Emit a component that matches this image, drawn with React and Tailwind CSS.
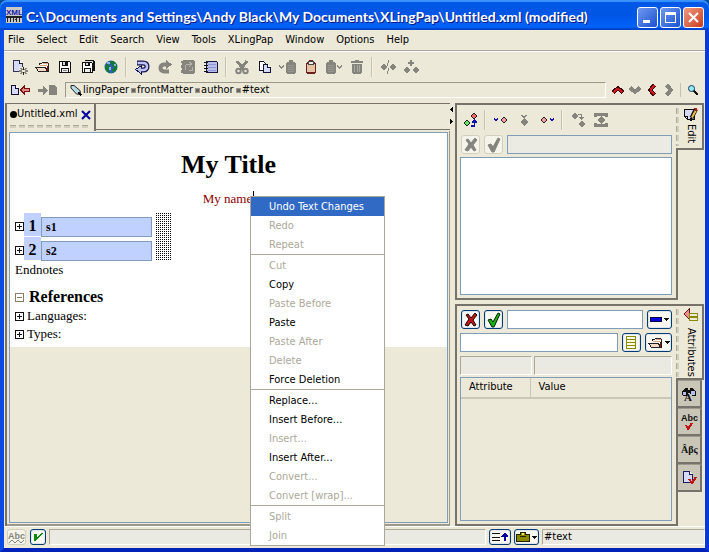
import React from "react";

const GREY = "#85857d";

function Icon({ w = 16, h = 16, children, label }) {
  return (
    <svg width={w} height={h} viewBox={`0 0 ${w} ${h}`} fill="none" shapeRendering="crispEdges" className="block shrink-0" role={label ? "img" : undefined} aria-label={label} aria-hidden={label ? undefined : true}>
      {children}
    </svg>
  );
}

const NewIcon = () => (
  <Icon w={18}>
    <path d="M3.500 1.500h6l3 3v8h-9z" fill="#d6d9f8" stroke="#33334e" />
    <path d="M9.500 1.500v3h3" fill="#fff" stroke="#1a1a2e" />
    <path d="M9 8h8v8H9z" fill="#ece9d8" />
    <path d="M13.500 8v3M13.500 13v3M9 12h3M15 12h3M10.500 9l2 2M16.500 9l-2 2M10.500 15l2-2M16.500 15l-2-2" stroke="#222" shapeRendering="auto" />
  </Icon>
);
const OpenIcon = () => (
  <Icon>
    <path d="M5.500 6V4.500h2l1-1h5l1 1v8h-2" fill="#fff6ee" stroke="#222" />
    <path d="M9 4.500h5M6 6.500h7" stroke="#e0a488" />
    <path d="M2 8.500h9.500l2 4h-9z" fill="#f3d9c6" stroke="#222" />
    <path d="M13.500 7v5" stroke="#7a1313" />
  </Icon>
);
const SaveIcon = () => (
  <Icon>
    <path d="M2.500 2.500h10l1 1v10h-11z" fill="#fff" stroke="#111" />
    <path d="M5.500 2.500h5v4h-5z" fill="#d8d8d8" stroke="#111" />
    <path d="M4.500 9.500h7v4h-7z" fill="#eee" stroke="#111" />
    <path d="M6 11.500h4" stroke="#888" />
    <path d="M8 3h2v3H8z" fill="#111" />
  </Icon>
);
const SaveAllIcon = () => (
  <Icon>
    <path d="M4.500 1.500h9l1 1v9h-2M13.500 2v10" fill="#d5d5d5" stroke="#111" />
    <path d="M2.500 3.500h9l1 1v9h-10z" fill="#fff" stroke="#111" />
    <path d="M5.500 3.500h4v3h-4z" fill="#d8d8d8" stroke="#111" />
    <path d="M4.500 9.500h6v4h-6z" fill="#eee" stroke="#111" />
    <path d="M8 4h1v2H8z" fill="#111" />
  </Icon>
);
const GlobeIcon = () => (
  <Icon>
    <circle cx="8" cy="8" r="6.500" fill="#2c5fb4" shapeRendering="auto" />
    <path d="M7 2h3l4 3v5l-3 4-1 0-1-4 2-2-3-2zM3 5l2 0 2 3-2 2 2 4-2 0-3-4z" fill="#127a35" />
    <path d="M4 3h3v2H4zM6 8h2v3H6zM11 5h2v2h-2z" fill="#8fb5e8" />
  </Icon>
);
const UndoIcon = () => (
  <Icon>
    <path d="M3 4h6q4 0 4 3.500T9 11H7" stroke="#151550" strokeWidth="5" shapeRendering="auto" />
    <path d="M7.500 6.500v8.500l-6-4.500z" fill="#b9bdea" stroke="#151550" />
    <path d="M3.500 4H9q4 0 4 3.500T9 11H6" stroke="#c0c4f2" strokeWidth="2.500" shapeRendering="auto" />
  </Icon>
);
const RedoIcon = () => (
  <Icon>
    <path d="M10 5.500H7Q3.500 6 3.500 9t3.500 3.500h5" stroke={GREY} strokeWidth="4" shapeRendering="auto" />
    <path d="M9 1v9l6-4.500z" fill={GREY} />
  </Icon>
);
const RepeatIcon = () => (
  <Icon>
    <path d="M3 1h11v1h1v12h-1v1H3v-1H1v-3h1V9H1V6h1V4H1V2h2z" fill={GREY} />
    <path d="M6 11Q4 5 8 5h3M9 3l3 2-3 3M12 8v3H9" stroke="#b5b3a8" />
  </Icon>
);
const HistoryIcon = () => (
  <Icon>
    <path d="M3.500 2.500h10l1 1v10h-11z" fill="#b9bdea" stroke="#151540" />
    <path d="M5 5.500h8M5 8.500h8M5 11.500h8" stroke="#8f94d6" />
    <path d="M1 3.500h4M1 6.500h4M1 9.500h4M1 12.500h4" stroke="#111" />
  </Icon>
);
const CutIcon = () => (
  <Icon>
    <path d="M3 2l7 9M13 2l-7 9" stroke={GREY} strokeWidth="3" />
    <circle cx="4.500" cy="12" r="2.200" stroke={GREY} strokeWidth="2" shapeRendering="auto" />
    <circle cx="11.500" cy="12" r="2.200" stroke={GREY} strokeWidth="2" shapeRendering="auto" />
  </Icon>
);
const CopyIcon = () => (
  <Icon>
    <path d="M2.500 2.500h4l2 2v7h-6z" fill="#fff" stroke="#111133" />
    <path d="M6.500 5.500h4l3 3v5h-7z" fill="#d6d9f8" stroke="#111133" />
    <path d="M10.500 5.500v3h3" fill="#fff" stroke="#111133" />
  </Icon>
);
const Clip = ({ x = 0, live }) => (
  <g transform={`translate(${x} 0)`}>
    <path d="M3 3h2V1h4v2h2v1h1v10h-1v1H3v-1H2V4h1z" fill={live ? "#6d2020" : GREY} />
    {live ? <path d="M3 5h8v8H3z" fill="#e3c3a4" /> : <path d="M4 6h6M4 8h6M4 10h6M4 12h6" stroke="#98988f" />}
    {live && <path d="M4.500 2.500h5v3h-5z" fill="#eee" stroke="#444" />}
  </g>
);
const PasteBeforeIcon = () => (
  <Icon w={18}>
    <path d="M0 6.500L2.500 9 5 6.500" stroke={GREY} strokeWidth="2" />
    <Clip x={5} />
  </Icon>
);
const PasteIcon = () => (
  <Icon>
    <Clip x={1} live />
  </Icon>
);
const PasteAfterIcon = () => (
  <Icon w={18}>
    <Clip x={-1} />
    <path d="M12 6.500L14.500 9 17 6.500" stroke={GREY} strokeWidth="2" />
  </Icon>
);
const TrashIcon = () => (
  <Icon>
    <path d="M2 2h4V1h4v1h4v2H2zM3 5h10v9h-1v1H4v-1H3z" fill={GREY} />
    <path d="M5.500 6v7M8.500 6v7M10.500 6v7" stroke="#aaa9a0" />
  </Icon>
);
const SplitIcon = () => (
  <Icon>
    <path d="M0 8l3.500-3.500L7 8l-3.500 3.500zM9 8l3.500-3.500L16 8l-3.500 3.500z" fill={GREY} />
    <path d="M8.500 1v3M7.500 4v3M8.500 9v3M7.500 12v3" stroke={GREY} />
  </Icon>
);
const JoinIcon = () => (
  <Icon>
    <path d="M0 11l3.500-3.500L7 11l-3.500 3.500zM9 11l3.500-3.500L16 11l-3.500 3.500z" fill={GREY} />
    <path d="M8 1v6M5 4h6" stroke={GREY} strokeWidth="2" />
  </Icon>
);
const BackIcon = () => (
  <Icon w={20}>
    <path d="M1.500 3.500h4l3 3v6h-7z" fill="#d6d9f8" stroke="#111133" />
    <path d="M5.500 3.500v3h3" fill="#fff" stroke="#111133" />
    <path d="M10.500 8L14 4.500v2h5v3h-5v2z" fill="#e08a8a" stroke="#7a1010" />
  </Icon>
);
const ForwardIcon = () => (
  <Icon w={20}>
    <path d="M0 7h5V4l5 4.500L5 13v-3H0z" fill={GREY} />
    <path d="M11 3h5l3 3v7h-8z" fill={GREY} />
  </Icon>
);
const PencilIcon = () => (
  <Icon w={12} h={12}>
    <path d="M1 1.500h3l6 5 .500 4-4-.500L1 4z" fill="#b7dbe4" stroke="#222" shapeRendering="auto" />
    <path d="M8.500 8.500l3 3" stroke="#111" strokeWidth="1.500" />
  </Icon>
);
const Chevron = ({ turn, live }) => (
  <Icon w={12} h={12}>
    <g transform={`rotate(${turn} 6 6)`}>
      <path d="M1 8.500l5-4.500 5 4.500" stroke={live ? "#3a0505" : GREY} strokeWidth="4" />
      {live && <path d="M1.500 8.500l4.500-4 4.500 4" stroke="#cc1a1a" strokeWidth="2" />}
    </g>
  </Icon>
);
const SearchIcon = () => (
  <Icon w={12} h={12}>
    <path d="M6 6l5 5" stroke="#111" strokeWidth="2" />
    <circle cx="4.500" cy="4.500" r="3" fill="#8ff0f4" stroke="#223366" shapeRendering="auto" />
  </Icon>
);
const Diamond = ({ cx, cy, fill = "#f59a9a", stroke = "#222" }) => (
  <path d={`M${cx - 3} ${cy}l3-3 3 3-3 3z`} fill={fill} stroke={stroke} shapeRendering="auto" />
);
const TreeIcon = () => (
  <Icon>
    <Diamond cx={11} cy={4} fill="#f06a6a" />
    <Diamond cx={4} cy={11} fill="#63e563" />
    <path d="M8 14h3.500V9M9 11l2.500-2.500L14 11" stroke="#1212a8" strokeWidth="1.500" />
  </Icon>
);
const BeforeIcon = () => (
  <Icon>
    <path d="M1 6.500l2 2 2-2" stroke="#1212a8" strokeWidth="2" />
    <Diamond cx={11} cy={8} />
  </Icon>
);
const InsertIcon = () => (
  <Icon>
    <path d="M5.500 3L8 5.500 10.500 3" stroke={GREY} strokeWidth="1.500" />
    <path d="M4 10l4-4 4 4-4 4z" fill={GREY} />
  </Icon>
);
const AfterIcon = () => (
  <Icon>
    <Diamond cx={5} cy={8} />
    <path d="M11 6.500l2 2 2-2" stroke="#1212a8" strokeWidth="2" />
  </Icon>
);
const ConvertIcon = () => (
  <Icon>
    <path d="M1 4l3.500-3.500L8 4 4.500 7.500zM8 12l3.500-3.500L15 12l-3.500 3.500z" fill={GREY} />
    <path d="M8 2.500h3.500V7M9.500 5l2 2 2-2" stroke={GREY} />
  </Icon>
);
const WrapIcon = () => (
  <Icon>
    <path d="M1 1h14v4h-3V4H4v1H1zM1 15h14v-4h-3v1H4v-1H1z" fill={GREY} />
    <path d="M4 8l4-4 4 4-4 4z" fill={GREY} />
  </Icon>
);
const CrossIcon = ({ off }) => (
  <Icon>
    <path d="M3 3l2-1 3 4 4-5 2 2-4 5 3 5-2 1-3-4-3 4-3-1 4-6z" fill={off ? GREY : "#c01414"} stroke={off ? GREY : "#1c0303"} shapeRendering="auto" />
  </Icon>
);
const CheckIcon = ({ off }) => (
  <Icon>
    <path d="M2 8l3-1 2 3 5-9 2 1-6 13H6z" fill={off ? GREY : "#12b012"} stroke={off ? GREY : "#052605"} shapeRendering="auto" />
  </Icon>
);
const EditIcon = () => (
  <Icon>
    <path d="M1.500 2.500h10v10h-7l-3-3z" fill="#d6d9f8" stroke="#111" />
    <path d="M1.500 9.500h3v3" fill="#fff" stroke="#111" />
    <path d="M13 2l-4.500 9" stroke="#111" strokeWidth="4" shapeRendering="auto" />
    <path d="M13 3L9 10.500" stroke="#efbd43" strokeWidth="2" shapeRendering="auto" />
    <path d="M12 1h2v3h-2z" fill="#c01414" />
    <path d="M7 11h2v3H7z" fill="#111" />
  </Icon>
);
const AttributesIcon = () => (
  <Icon>
    <path d="M1 6l5-5v5l3 5H6z" fill="#ef8e8e" stroke="#6a1616" />
    <path d="M6.500 5.500h8v3h-8zM6.500 9.500h8v3h-8z" fill="#ece9d8" stroke="#8a8a00" />
  </Icon>
);
const FindIcon = () => (
  <Icon>
    <path d="M5 2h2v2h2V2h2l2 1 2 3v3l-1 1h-3L9 8V7H7v1L5 10H2L1 9V6l2-3z" fill="#111" />
    <path d="M2 6h3v3H2zM10 5h4v4h-4z" fill="#b9bdea" />
    <text x="3" y="15" fontSize="11" fontWeight="700" fill="#111" className="font-['Liberation_Serif',serif]">A</text>
  </Icon>
);
const SpellIcon = () => (
  <Icon w={18} h={18}>
    <text x="1" y="8" fontSize="9" fontWeight="700" fill="#111" className="font-['Liberation_Sans',sans-serif]">Abc</text>
    <path d="M6 12l2 4 4-6" stroke="#c01414" strokeWidth="2" />
  </Icon>
);
const CharsIcon = () => (
  <Icon w={18}>
    <text x="1" y="11" fontSize="10" fontWeight="700" fill="#111" className="font-['Liberation_Serif',serif]">Âβς</text>
  </Icon>
);
const ValidateIcon = () => (
  <Icon>
    <path d="M2.500 1.500h6l3 3v8h-9z" fill="#d6d9f8" stroke="#1b1b55" />
    <path d="M8.500 1.500v3h3" fill="#fff" stroke="#1b1b55" />
    <path d="M8 9l3 4 4-6" stroke="#c01414" strokeWidth="2" />
  </Icon>
);
const Caret = () => (
  <Icon w={5} h={3}>
    <path d="M0 0h5L2.500 3z" fill="#111" />
  </Icon>
);

function Tool({ label, children, width = "w-[23px]" }) {
  return (
    <button type="button" aria-label={label} className={`flex h-[23px] ${width} shrink-0 items-center justify-center`}>
      {children}
    </button>
  );
}
const Sep = () => <span className="mx-[3px] h-5 w-0.5 shrink-0 border-l border-r border-l-[#c5c2b0] border-r-[#f3f1e6]" />;

function XpButton({ label, off, width = "w-[19px]", height = "h-[19px]", children }) {
  return (
    <button
      type="button"
      aria-label={label}
      disabled={off}
      className={`flex ${height} ${width} shrink-0 items-center justify-center gap-0.5 rounded-[3px] border ${off ? "border-[#d2cfbc] bg-[#f5f4ea]" : "border-[#003c74] bg-[#f8f7f0] shadow-[inset_0_0_0_1px_#dfe6f0]"}`}
    >
      {children}
    </button>
  );
}

function Expander({ minus }) {
  return (
    <button type="button" aria-label={minus ? "Collapse" : "Expand"} className="block shrink-0">
      <Icon w={9} h={9}>
        <path d="M.5.500h8v8h-8z" fill="#fff" stroke={minus ? "#8a7a68" : "#111"} />
        <path d={minus ? "M2 4.500h5" : "M2 4.500h5M4.500 2v5"} stroke={minus ? "#8a7a68" : "#111"} />
      </Icon>
    </button>
  );
}

const menus = ["File", "Select", "Edit", "Search", "View", "Tools", "XLingPap", "Window", "Options", "Help"];

const groups = [
  [["Undo Text Changes", "active"], ["Redo"], ["Repeat"]],
  [["Cut"], ["Copy", "on"], ["Paste Before"], ["Paste", "on"], ["Paste After"], ["Delete"], ["Force Deletion", "on"]],
  [["Replace...", "on"], ["Insert Before...", "on"], ["Insert..."], ["Insert After...", "on"], ["Convert..."], ["Convert [wrap]..."]],
  [["Split"], ["Join"]],
];

function ContextMenu() {
  return (
    <div role="menu" className="absolute left-[250px] top-[196px] w-[135px] border border-[#aca899] bg-white">
      {groups.map((items, i) => (
        <div key={i} className={i ? "border-t border-[#aca899] pt-px" : ""}>
          {items.map(([name, state]) => (
            <button
              key={name}
              type="button"
              role="menuitem"
              disabled={!state}
              className={`block h-[19px] w-full whitespace-nowrap pl-[18px] text-left ${state === "active" ? "bg-[#316ac5] leading-[19px] text-white" : state ? "leading-[19px] text-black" : "leading-[17px] text-[#aca899]"}`}
            >
              {name}
            </button>
          ))}
        </div>
      ))}
    </div>
  );
}

function TitleBar() {
  const box = "flex h-[21px] w-[21px] items-center justify-center rounded-[3px] border border-white";
  return (
    <header className="flex h-[30px] items-center rounded-t-[7px] bg-gradient-to-b from-[#0058e6] via-[#0055e5] to-[#0066ff] pl-1.5 pr-[5px] shadow-[inset_0_2px_1px_#3a93ff,inset_0_-2px_1px_#0043cf]">
      <Icon>
        <rect width="16" height="16" fill="#c9c9c9" />
        <text x="0" y="8" fontSize="8" fontWeight="700" fill="#1b1ba8" className="font-['Liberation_Sans',sans-serif]">XML</text>
        <path d="M0 9h16v2H0zM1 11h1v4H1zM4 11h1v4H4zM7 11h1v4H7zM10 11h1v4h-1zM13 11h1v4h-1zM9 12h2v1H9z" fill="#222" />
      </Icon>
      <h1 className="ml-1 min-w-0 flex-1 whitespace-nowrap pt-1 font-['Lato',sans-serif] text-[14px] font-bold leading-5 text-white [text-shadow:1px_1px_#0a1883]">
        C:\Documents and Settings\Andy Black\My Documents\XLingPap\Untitled.xml (modified)
      </h1>
      <div className="mt-1 flex gap-0.5">
        <button type="button" aria-label="Minimize" className={`${box} bg-gradient-to-br from-[#6f98f0] to-[#1c4fd0]`}>
          <Icon w={13} h={13}><path d="M2 9h7v3H2z" fill="#fff" /></Icon>
        </button>
        <button type="button" aria-label="Maximize" className={`${box} bg-gradient-to-br from-[#6f98f0] to-[#1c4fd0]`}>
          <Icon w={13} h={13}><path d="M1 1h11v11H1zM2 4v7h9V4z" fill="#fff" fillRule="evenodd" /></Icon>
        </button>
        <button type="button" aria-label="Close" className={`${box} bg-gradient-to-br from-[#f09a80] to-[#c8371a]`}>
          <Icon w={13} h={13}><path d="M2 2l9 9M11 2l-9 9" stroke="#fff" strokeWidth="2" shapeRendering="auto" /></Icon>
        </button>
      </div>
    </header>
  );
}

function Toolbars() {
  return (
    <>
      <nav className="flex h-[21px] items-center gap-3 border-b border-[#aca899] pl-1 shadow-[0_1px_#fff]">
        {menus.map((m) => <button key={m} type="button" className="pb-0.5 leading-[17px]">{m}</button>)}
      </nav>
      <div className="flex h-[31px] items-center pl-[3px]">
        <Tool label="New"><NewIcon /></Tool>
        <Tool label="Open"><OpenIcon /></Tool>
        <Tool label="Save"><SaveIcon /></Tool>
        <Tool label="Save all"><SaveAllIcon /></Tool>
        <Tool label="Browse"><GlobeIcon /></Tool>
        <Sep />
        <Tool label="Undo"><UndoIcon /></Tool>
        <Tool label="Redo"><RedoIcon /></Tool>
        <Tool label="Repeat"><RepeatIcon /></Tool>
        <Tool label="History"><HistoryIcon /></Tool>
        <Sep />
        <Tool label="Cut"><CutIcon /></Tool>
        <Tool label="Copy"><CopyIcon /></Tool>
        <Tool label="Paste before"><PasteBeforeIcon /></Tool>
        <Tool label="Paste"><PasteIcon /></Tool>
        <Tool label="Paste after"><PasteAfterIcon /></Tool>
        <Tool label="Delete"><TrashIcon /></Tool>
        <Sep />
        <Tool label="Split"><SplitIcon /></Tool>
        <Tool label="Join"><JoinIcon /></Tool>
      </div>
      <div className="flex h-[21px] items-start">
        <div className="flex h-4 w-[61px] shrink-0 items-center gap-2 pl-1.5">
          <button type="button" aria-label="Back"><BackIcon /></button>
          <button type="button" aria-label="Forward"><ForwardIcon /></button>
        </div>
        <div className="flex h-4 min-w-0 flex-1 items-center border border-b-white border-l-[#9d9a8c] border-r-white border-t-[#9d9a8c] pl-1 leading-[14px]">
          <PencilIcon />
          <span className="ml-px">lingPaper</span>
          {["frontMatter", "author", "#text"].map((p) => (
            <React.Fragment key={p}>
              <i className="ml-0.5 mr-px size-[5px] border border-[#99978c] bg-[#666460]" />
              <span>{p}</span>
            </React.Fragment>
          ))}
        </div>
        <div className="flex h-4 shrink-0 items-center pl-[3px] pr-1.5">
          <Tool label="Parent" width="w-[17px]"><Chevron turn={0} live /></Tool>
          <Tool label="Child" width="w-[17px]"><Chevron turn={180} /></Tool>
          <Tool label="Previous sibling" width="w-[17px]"><Chevron turn={-90} live /></Tool>
          <Tool label="Next sibling" width="w-[17px]"><Chevron turn={90} /></Tool>
          <span className="ml-[3px] mr-1.5 h-[14px] w-px bg-[#c5c2b0]" />
          <button type="button" aria-label="Search"><SearchIcon /></button>
        </div>
      </div>
    </>
  );
}

function Section({ number, title }) {
  return (
    <div className="flex h-6 items-start">
      <div className="mt-[9px]"><Expander /></div>
      <label htmlFor={title} className="h-[23px] w-[17px] bg-[#c0d0ff] text-center text-[16px] font-bold leading-[26px]">{number}</label>
      <input id={title} defaultValue={title} className="mt-1 h-5 w-[111px] border border-[#7f9db9] bg-[#c0d0ff] pl-1 text-[12px] font-bold" />
    </div>
  );
}

function DocumentPane() {
  return (
    <section className="flex min-w-0 flex-1 flex-col border-l-2 border-[#77736a]">
      <div className="flex h-7 shrink-0">
        <div className="w-[89px] shrink-0 border-r-2 border-t border-[#77736a] px-[3px]">
          <div className="flex h-[21px] items-center">
            <i className="size-[7px] rounded-full bg-black" />
            <span className="flex-1 whitespace-nowrap">Untitled.xml</span>
            <button type="button" aria-label="Close tab">
              <Icon w={10} h={10}><path d="M1 1l8 8M9 1L1 9" stroke="#00009c" strokeWidth="2" shapeRendering="auto" /></Icon>
            </button>
          </div>
          <div className="h-[3px] bg-[repeating-linear-gradient(90deg,#aca899_0_6px,transparent_6px_9px)] [mask-image:linear-gradient(#000_0_1px,#0006_1px)]" />
        </div>
        <div className="mb-px flex-1 border-b border-t border-[#77736a]" />
      </div>
      <div className="flex flex-1 flex-col border-b-2 border-r border-b-[#9d9a8c] border-r-[#9d9a8c] pb-px pl-0.5 pr-px pt-px">
        <article className="flex-1 border border-[#7f9db9] font-['Liberation_Serif',serif]">
          <div className="h-[214px] bg-white pl-[5px] text-[13px] leading-[18px] text-black">
            <h2 className="-ml-[5px] pt-4 text-center text-[26px] font-bold leading-8">My Title</h2>
            <p className="-ml-[5px] pt-2.5 text-center leading-4 text-[#8b0000]">My name<span className="ml-px border-l border-black" /></p>
            <div className="flex pt-1.5">
              <div><Section number="1" title="s1" /><Section number="2" title="s2" /></div>
              <div className="ml-1 w-4 bg-[radial-gradient(circle,#000_0_0)] [mask-image:repeating-linear-gradient(90deg,#000_0_1px,transparent_1px_2px),repeating-linear-gradient(#000_0_1px,transparent_1px_2px)] [mask-composite:intersect]" />
            </div>
            <p>Endnotes</p>
            <div className="mt-2 flex items-center gap-[5px]"><Expander minus /><b className="text-[16px] leading-5">References</b></div>
            <div className="flex items-center gap-[3px]"><Expander />Languages:</div>
            <div className="flex items-center gap-[3px]"><Expander />Types:</div>
          </div>
        </article>
      </div>
    </section>
  );
}

const vGrip = "w-[3px] shrink-0 bg-[repeating-linear-gradient(#aca899_0_6px,transparent_6px_9px)] [mask-image:linear-gradient(90deg,#000_0_1px,#0006_1px)]";
const field = "min-w-0 border border-[#7f9db9]";
const statusBox = "border border-b-white border-l-[#aca899] border-r-white border-t-[#aca899] bg-[#ebeae2]";

function EditPanel() {
  return (
    <section className="flex h-[197px] shrink-0">
      <div className="flex min-w-0 flex-1 flex-col border-b-2 border-l-2 border-t-2 border-[#77736a] pb-[3px] pl-[3px] pr-1">
        <div className="flex h-[30px] shrink-0 items-center">
          <Tool label="Edit tree" width="w-[21px]"><TreeIcon /></Tool>
          <Sep />
          <Tool label="Insert before"><BeforeIcon /></Tool>
          <Tool label="Insert"><InsertIcon /></Tool>
          <Tool label="Insert after"><AfterIcon /></Tool>
          <Sep />
          <Tool label="Convert"><ConvertIcon /></Tool>
          <Tool label="Wrap"><WrapIcon /></Tool>
        </div>
        <div className="flex gap-1 pl-px">
          <XpButton label="Cancel" off><CrossIcon off /></XpButton>
          <XpButton label="Apply" off><CheckIcon off /></XpButton>
          <input aria-label="Element" disabled className={`${field} h-[19px] flex-1 bg-[#ebebe4]`} />
        </div>
        <div role="listbox" aria-label="Elements" tabIndex={0} className="mt-[3px] flex-1 border border-[#7f9db9] bg-white" />
      </div>
      <div className="flex w-7 shrink-0 flex-col">
        <button type="button" className="flex h-[47px] border-b-2 border-r-2 border-t-2 border-[#77736a]">
          <span className={`${vGrip} mt-[3px] h-[38px]`} />
          <span className="flex flex-1 flex-col items-center gap-px pt-0.5">
            <EditIcon />
            <span className="leading-[14px] [writing-mode:vertical-rl]">Edit</span>
          </span>
        </button>
        <div className="w-0.5 flex-1 bg-[#77736a]" />
      </div>
    </section>
  );
}

function AttributesPanel() {
  const tab = "ml-0.5 flex h-7 w-6 items-center justify-center border-b-2 border-r-2 border-t border-b-[#77736a] border-r-[#77736a] border-t-[#9d9a8c] bg-[#c9c6b8]";
  return (
    <section className="mt-1 flex flex-1">
      <div className="flex min-w-0 flex-1 flex-col gap-1 border-b-2 border-l-2 border-t-2 border-[#77736a] pb-[3px] pl-[3px] pr-1 pt-1">
        <div className="flex gap-1 pl-px">
          <XpButton label="Cancel"><CrossIcon /></XpButton>
          <XpButton label="Apply"><CheckIcon /></XpButton>
          <input aria-label="Attribute name" className={`${field} h-[19px] flex-1 bg-white`} />
          <XpButton label="Remove attribute" width="w-[25px]">
            <Icon w={12} h={5}><path d="M.5.500h11v4H.500z" fill="#0000e0" stroke="#000040" /></Icon>
            <Caret />
          </XpButton>
        </div>
        <div className="flex gap-1">
          <input aria-label="Attribute value" className={`${field} h-[19px] flex-1 bg-white`} />
          <XpButton label="Choose value">
            <Icon w={11} h={14}><path d="M.5.500h9v12h-9zM0 3.500h10M0 6.500h10M0 9.500h10" fill="#fbfbe8" stroke="#8a8a00" /></Icon>
          </XpButton>
          <XpButton label="Open" width="w-[27px]"><OpenIcon /><Caret /></XpButton>
        </div>
        <div className="flex h-[19px] shrink-0 gap-0.5">
          <div className={`${statusBox} w-[72px]`} />
          <div className={`${statusBox} flex-1`} />
        </div>
        <div className="-mt-0.5 flex-1 border border-[#7f9db9]">
          <table className="w-full table-fixed border-collapse">
            <thead>
              <tr className="h-5 border-b-2 border-[#cbc7b8] text-left">
                <th className="w-[69px] border-r border-[#cbc7b8] pl-2 font-normal">Attribute</th>
                <th className="pl-2 font-normal">Value</th>
              </tr>
            </thead>
          </table>
        </div>
      </div>
      <div className="flex w-7 shrink-0 flex-col">
        <button type="button" className="flex h-[76px] border-b-2 border-r-2 border-t-2 border-[#77736a]">
          <span className={`${vGrip} mt-[3px] h-[68px]`} />
          <span className="flex flex-1 flex-col items-center gap-1 pt-0.5">
            <AttributesIcon />
            <span className="leading-[14px] [writing-mode:vertical-rl]">Attributes</span>
          </span>
        </button>
        <div className="flex-1 border-l-2 border-[#77736a]">
          <div className="-ml-0.5">
            <button type="button" aria-label="Search" className={tab}><FindIcon /></button>
            <button type="button" aria-label="Spelling" className={tab}><SpellIcon /></button>
            <button type="button" aria-label="Characters" className={tab}><CharsIcon /></button>
            <button type="button" aria-label="Validate" className={tab}><ValidateIcon /></button>
          </div>
        </div>
      </div>
    </section>
  );
}

function StatusBar() {
  return (
    <footer className="flex h-[22px] shrink-0 items-center border-t border-white pb-px pl-[3px]">
      <XpButton label="Spell check" off height="h-4">
        <Icon w={17} h={15}>
          <text x="0" y="9" fontSize="9" fontWeight="700" fill={GREY} className="font-['Liberation_Sans',sans-serif]">Abc</text>
          <path d="M1 13l3-3 3 3 3-3 3 3 3-3" stroke={GREY} />
        </Icon>
      </XpButton>
      <span className="w-1" />
      <XpButton label="Valid" width="w-4" height="h-4">
        <Icon w={10} h={10}><path d="M1 2h3v3l4-4h2L3 9H1z" fill="#0a8a0a" /></Icon>
      </XpButton>
      <div className={`${statusBox} ml-[3px] mr-[3px] h-4 flex-1`} />
      <XpButton label="Show messages" width="w-[22px]" height="h-4">
        <Icon w={16} h={10}>
          <path d="M0 1.500h8M0 5.500h8M0 8.500h8" stroke="#111" />
          <path d="M9 5l4-5 4 5zM12 4h2v5h-2z" fill="#00009c" />
        </Icon>
      </XpButton>
      <span className="w-[3px]" />
      <XpButton label="Clipboard" width="w-[25px]" height="h-4">
        <Icon w={14} h={10}>
          <path d="M.5 2.500h4v-2h5v2h4v7h-13z" fill="#8a8a00" stroke="#222200" />
          <path d="M4 4h6v1H4z" fill="#222200" />
          <path d="M6 1h2v2H6z" fill="#eeee66" />
        </Icon>
        <Caret />
      </XpButton>
      <div className={`${statusBox} ml-[3px] h-4 w-[163px] pl-px leading-[14px]`}>#text</div>
    </footer>
  );
}

export default function App() {
  return (
    <div className="relative flex min-h-screen flex-col bg-[#004e98] font-['DejaVu_Sans_Condensed','DejaVu_Sans',sans-serif] text-[11px] text-black">
      <TitleBar />
      <div className="flex flex-1 flex-col border-x-4 border-b-4 border-b-[#0022b8] border-l-[#0a4be6] border-r-[#0838d8] bg-[#ece9d8]">
        <Toolbars />
        <main className="flex flex-1 pl-px pr-px">
          <DocumentPane />
          <div className="flex w-[5px] shrink-0 flex-col gap-[7px] pt-1">
            <Icon w={4} h={5}><path d="M3 0v5L0 2.500z" fill="#000" /></Icon>
            <Icon w={4} h={5}><path d="M0 0v5l3-2.500z" fill="#000" /></Icon>
          </div>
          <div className="flex w-[249px] shrink-0 flex-col">
            <EditPanel />
            <AttributesPanel />
          </div>
        </main>
        <StatusBar />
      </div>
      <ContextMenu />
    </div>
  );
}
